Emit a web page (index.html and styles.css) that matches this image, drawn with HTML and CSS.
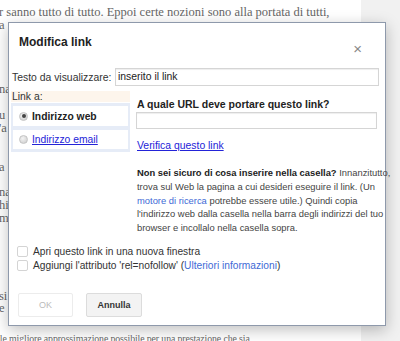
FILE: index.html
```html
<!DOCTYPE html>
<html lang="it">
<head>
    <meta charset="UTF-8">
    <title>Modifica link</title>
    <link rel="stylesheet" href="styles.css">
</head>
<body>
    <div class="page">
        <div class="post">
            <p class="line">r sanno tutto di tutto. Eppoi certe nozioni sono alla portata di tutti,</p>
            <p class="line">a</p>
            <p class="line"></p>
            <p class="line"></p>
            <p class="line"></p>
            <p class="line"></p>
            <p class="line">na</p>
            <p class="line"></p>
            <p class="line">u</p>
            <p class="line">'a</p>
            <p class="line"></p>
            <p class="line"></p>
            <p class="line">a</p>
            <p class="line"></p>
            <p class="line">na</p>
            <p class="line">hi</p>
            <p class="line">m</p>
            <p class="line"></p>
            <p class="line"></p>
            <p class="line"></p>
            <p class="line"></p>
            <p class="line"></p>
            <p class="line">si</p>
            <p class="line">e</p>
            <p class="line"></p>
            <p class="line last">alle migliore approssimazione possibile per una prestazione che sia</p>
        </div>
    </div>

    <div class="dialog">
        <div class="dialog-head">
            <h2>Modifica link</h2>
            <span class="close">&times;</span>
        </div>

        <div class="text-row">
            <label>Testo da visualizzare:</label>
            <div class="field wide">inserito il link</div>
        </div>

        <div class="link-body">
            <div class="tabs">
                <div class="tabs-title">Link a:</div>
                <div class="tab-box">
                    <div class="tab active"><span class="radio checked"></span>Indirizzo web</div>
                    <div class="tab"><span class="radio"></span><a href="#">Indirizzo email</a></div>
                </div>
            </div>
            <div class="url-pane">
                <div class="question">A quale URL deve portare questo link?</div>
                <div class="field url"></div>
                <a class="verify" href="#">Verifica questo link</a>
                <p class="hint"><b>Non sei sicuro di cosa inserire nella casella?</b> Innanzitutto,<br>trova sul Web la pagina a cui desideri eseguire il link. (Un<br><a href="#">motore di ricerca</a> potrebbe essere utile.) Quindi copia<br>l'indirizzo web dalla casella nella barra degli indirizzi del tuo<br>browser e incollalo nella casella sopra.</p>
            </div>
        </div>

        <div class="checks">
            <div class="check"><span class="box"></span>Apri questo link in una nuova finestra</div>
            <div class="check"><span class="box"></span>Aggiungi l'attributo 'rel=nofollow' (<a href="#">Ulteriori informazioni</a>)</div>
        </div>

        <div class="buttons">
            <button class="btn disabled">OK</button>
            <button class="btn">Annulla</button>
        </div>
    </div>
</body>
</html>
```

FILE: styles.css
```css
body {
    margin: 0;
    background: #f1f1f1;
    font-family: "Liberation Sans", Arial, sans-serif;
    overflow: hidden;
}
.page {
    width: 361px;
    height: 341px;
    background: #fff;
    overflow: hidden;
}
.post {
    font-family: "Liberation Serif", "Times New Roman", serif;
    color: #666;
    font-size: 12.5px;
    padding-top: 6px;
    margin-left: -1px;
}
.line {
    margin: 0;
    line-height: 12.9px;
    height: 12.9px;
    white-space: nowrap;
}
.line.last {
    margin-left: -6px;
    margin-top: 5px;
    font-size: 9.8px;
    letter-spacing: -0.1px;
}

.dialog {
    position: absolute;
    left: 8px;
    top: 22px;
    width: 376px;
    height: 302px;
    background: #fff;
    border: 1px solid #8e99ab;
    box-shadow: 0 4px 14px rgba(0, 0, 0, 0.25);
    color: #222;
}
.dialog-head {
    display: flex;
    justify-content: space-between;
    box-sizing: border-box;
    height: 45px;
    padding: 12px 23px 0 10px;
}
.dialog-head h2 {
    margin: 0;
    font-size: 12px;
    line-height: 14px;
    font-weight: bold;
    color: #222;
}
.close {
    font-size: 15px;
    line-height: 14px;
    color: #888;
    margin-top: 7px;
}

.text-row {
    display: flex;
    align-items: center;
    padding: 0 6px 0 3px;
    font-size: 10.4px;
}
.text-row label {
    flex: 0 0 103px;
    color: #333;
}
.field {
    border: 1px solid #d5d5d5;
    box-shadow: inset 0 1px 1px #eee;
    font-size: 10.4px;
    color: #222;
    padding: 0 2px;
    box-sizing: border-box;
}
.field.wide {
    flex: 1;
    height: 18px;
    line-height: 16px;
}

.link-body {
    display: flex;
    margin-top: 5px;
    padding-left: 2px;
}
.tabs {
    flex: 0 0 119px;
}
.tabs-title {
    background: #fdf5ec;
    font-size: 10.4px;
    height: 11px;
    line-height: 11px;
    padding-left: 1px;
    color: #333;
}
.tab-box {
    margin-top: 1px;
    background: #e6ecf7;
    padding: 3px 2px;
    display: flex;
    flex-direction: column;
    gap: 4px;
}
.tab {
    background: #fff;
    height: 20px;
    display: flex;
    align-items: center;
    font-size: 10.3px;
    padding-left: 6px;
}
.tab + .tab {
    height: 19px;
}
.tab.active {
    font-weight: bold;
}
.tab a {
    color: #2323d8;
}
.radio {
    width: 9px;
    height: 9px;
    border-radius: 50%;
    background: radial-gradient(circle at 40% 35%, #f4f4f4, #c9c9c9);
    border: 1px solid #c4c4c4;
    box-sizing: border-box;
    margin-right: 4px;
    position: relative;
}
.radio.checked::after {
    content: "";
    position: absolute;
    left: 1.5px;
    top: 1.5px;
    width: 4px;
    height: 4px;
    border-radius: 50%;
    background: #444;
}

.url-pane {
    margin-left: 6px;
    padding-top: 7px;
}
.question {
    font-size: 10.5px;
    line-height: 12px;
    font-weight: bold;
    color: #222;
    padding-left: 1px;
}
.field.url {
    width: 241px;
    height: 17px;
    margin-top: 2px;
}
.verify {
    display: block;
    margin-top: 11px;
    margin-left: 1px;
    font-size: 10.4px;
    line-height: 12px;
    color: #2323d8;
}
.hint {
    margin: 14px 0 0 1px;
    font-size: 9.4px;
    line-height: 13.8px;
    color: #444;
    white-space: nowrap;
}
.hint b {
    color: #222;
}
.hint a {
    color: #3e6ad6;
    text-decoration: none;
}

.checks {
    margin-top: 11px;
    padding-left: 8px;
    display: flex;
    flex-direction: column;
    gap: 2px;
}
.check {
    display: flex;
    align-items: center;
    font-size: 10.2px;
    line-height: 12px;
    color: #333;
    height: 12px;
}
.check a {
    color: #3e6ad6;
    text-decoration: none;
}
.box {
    width: 11px;
    height: 11px;
    border: 1px solid #d4d4d4;
    border-radius: 2px;
    box-sizing: border-box;
    margin-right: 5px;
}

.buttons {
    display: flex;
    gap: 13px;
    padding-left: 9px;
    margin-top: 21px;
}
.btn {
    width: 56px;
    height: 24px;
    font-family: "Liberation Sans", Arial, sans-serif;
    font-size: 9px;
    font-weight: bold;
    color: #333;
    background: #f3f3f3;
    border: 1px solid #dcdcdc;
    border-radius: 2px;
    padding: 0;
}
.btn.disabled {
    width: 55px;
    background: #fff;
    border-color: #ececec;
    color: #bbb;
    font-weight: normal;
}
```
